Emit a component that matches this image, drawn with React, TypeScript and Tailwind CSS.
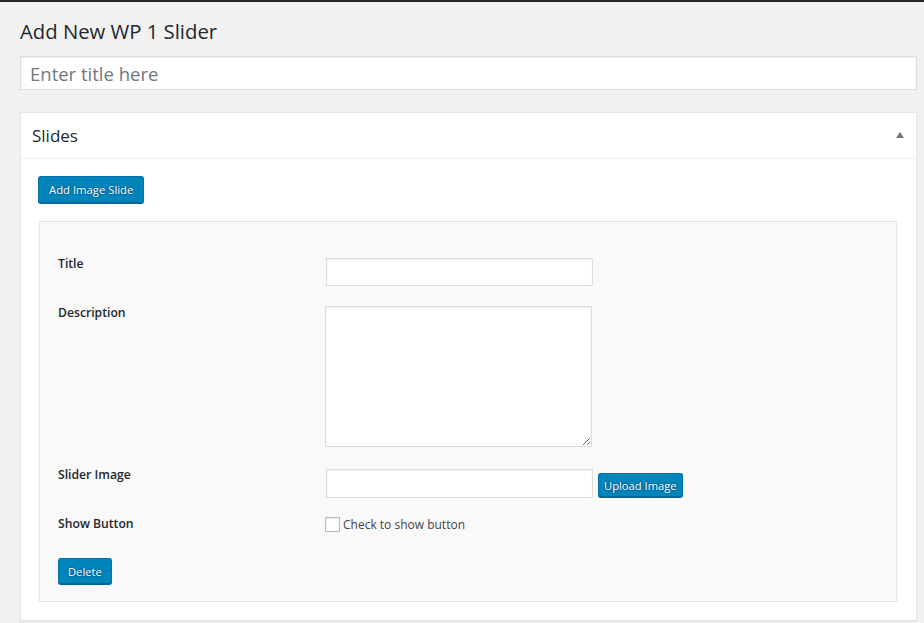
import { useState } from "react";

const font = { fontFamily: '"Open Sans", "Noto Sans", sans-serif' };

const blueButton =
  "bg-[#0085ba] border border-[#0073aa] border-b-[#006799] rounded-[3px] text-white shadow-[0_1px_0_#006799] [text-shadow:0_-1px_1px_#006799,1px_0_1px_#006799,0_1px_1px_#006799,-1px_0_1px_#006799] leading-none";

const field =
  "bg-white border border-[#dddddd] shadow-[inset_0_1px_2px_rgba(0,0,0,0.07)] outline-none";

const Row = ({
  label,
  className,
  children,
}: {
  label: string;
  className?: string;
  children: React.ReactNode;
}) => (
  <div className={`flex items-start ${className ?? ""}`}>
    <div className="w-[268px] shrink-0 text-[12.2px] leading-[20px] font-semibold text-[#23282d]">
      {label}
    </div>
    <div className="flex items-start">{children}</div>
  </div>
);

export default function App() {
  const [title, setTitle] = useState("");
  const [checked, setChecked] = useState(false);

  return (
    <div
      className="min-h-[623px] bg-[#f1f1f1] border-t-2 border-[#23282d] pl-5 pr-[7px]"
      style={font}
    >
      <h1 className="pt-[15px] text-[20.3px] leading-[29px] font-normal text-[#23282d]">
        Add New WP 1 Slider
      </h1>

      <input
        className={`${field} mt-[10px] w-full h-[34px] px-[9px] text-[18.5px] text-[#23282d] placeholder:text-[#72777c]`}
        placeholder="Enter title here"
        value={title}
        onChange={(e) => setTitle(e.target.value)}
      />

      <div className="mt-[22px] bg-white border border-[#e5e5e5] shadow-[0_1px_1px_rgba(0,0,0,0.04)]">
        <div className="h-[46px] flex items-center justify-between pl-[11px] pr-[12px] border-b border-[#eeeeee]">
          <h2 className="text-[17px] text-[#23282d]">Slides</h2>
          <svg width="8" height="6" viewBox="0 0 8 6" className="mb-[2px]">
            <path d="M4 0 L8 6 L0 6 Z" fill="#72777c" />
          </svg>
        </div>

        <div className="pt-[17px] pb-[18px] pl-[17px] pr-[19px]">
          <button
            className={`${blueButton} h-[27px] px-[10px] text-[11.3px] shadow-[0_0_0_1px_#5b9dd9,0_0_2px_1px_rgba(30,140,190,0.8)]`}
          >
            Add Image Slide
          </button>

          <div className="mt-[18px] ml-px bg-[#f9f9f9] border border-[#e5e5e5] pt-[32px] pb-[17px] pl-[18px]">
            <Row label="Title">
              <input className={`${field} mt-[4px] w-[267px] h-[28px] px-2 text-[13px]`} />
            </Row>

            <Row label="Description" className="mt-[17px]">
              <textarea
                className={`${field} mt-[3px] -ml-px w-[267px] h-[141px] p-2 text-[13px]`}
              />
            </Row>

            <Row label="Slider Image" className="mt-[18px]">
              <input className={`${field} mt-[4px] w-[267px] h-[29px] px-2 text-[13px]`} />
              <button
                className={`${blueButton} mt-[8px] ml-[5px] h-[24px] px-[5px] text-[11.2px]`}
              >
                Upload Image
              </button>
            </Row>

            <Row label="Show Button" className="mt-[16px]">
              <label className="flex items-start -ml-px cursor-pointer">
                <span
                  onClick={() => setChecked(!checked)}
                  className="mt-[3px] w-[15px] h-[15px] bg-white border border-[#b4b9be] shadow-[inset_0_1px_2px_rgba(0,0,0,0.1)] flex items-center justify-center text-[#1e8cbe] text-[12px]"
                >
                  {checked ? "✓" : ""}
                </span>
                <span className="ml-[3px] mt-[2px] text-[12px] leading-[18px] text-[#444444]">
                  Check to show button
                </span>
              </label>
            </Row>

            <button className={`${blueButton} mt-[24px] h-[26px] px-[9px] text-[11.2px]`}>
              Delete
            </button>
          </div>
        </div>
      </div>
    </div>
  );
}
